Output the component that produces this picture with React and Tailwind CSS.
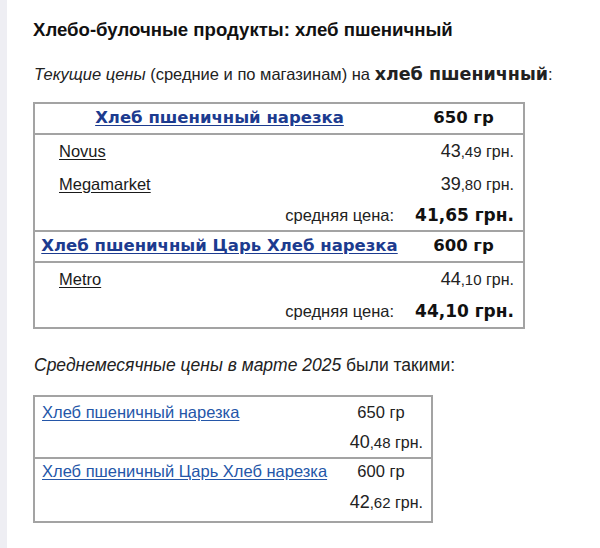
import React from "react";

const arial = { fontFamily: '"Liberation Sans", Arial, sans-serif' };

function Price({ int, dec }) {
  return (
    <span className="whitespace-nowrap text-[#222]">
      <span className="text-[18px]">{int}</span>
      <span className="text-[15px]">,{dec}</span>
      <span className="text-[16px]"> грн.</span>
    </span>
  );
}

function Header({ name, weight }) {
  return (
    <div className="grid grid-cols-[369px_1fr] h-[31px] items-center border-b-2 border-[#a3a3a3] font-['DejaVu_Sans',Verdana,sans-serif] font-bold">
      <div className="text-center whitespace-nowrap">
        <a className="text-[16.5px] text-[#1c3b8f] underline underline-offset-2">{name}</a>
      </div>
      <div className="text-center text-[16.5px] text-[#111]">{weight}</div>
    </div>
  );
}

function Store({ name, int, dec }) {
  return (
    <div className="grid grid-cols-[369px_1fr] h-[33px] items-center font-['Liberation_Sans',Arial,sans-serif]">
      <div className="pl-[24px]">
        <a className="text-[16.5px] text-[#1a1a1a] underline underline-offset-2">{name}</a>
      </div>
      <div className="text-right pr-[9px]">
        <Price int={int} dec={dec} />
      </div>
    </div>
  );
}

function Avg({ value, last }) {
  return (
    <div className={"grid grid-cols-[369px_1fr] h-[31px] items-center " + (last ? "" : "border-b-2 border-[#a3a3a3]")}>
      <div className="text-right pr-[10px] text-[16.5px] text-[#222] font-['Liberation_Sans',Arial,sans-serif]">средняя цена:</div>
      <div className="text-right pr-[9px] text-[17px] font-bold text-[#111] font-['DejaVu_Sans',Verdana,sans-serif] whitespace-nowrap">{value}</div>
    </div>
  );
}

function MonthRow({ name, weight, int, dec, last }) {
  return (
    <div className={last ? "" : "border-b-2 border-[#a3a3a3]"}>
      <div className={"grid grid-cols-[300px_1fr] items-center " + (last ? "h-[24px]" : "h-[30px]")}>
        <div className="pl-[7px] whitespace-nowrap">
          <a className="text-[16.5px] text-[#2456a8] underline underline-offset-2">{name}</a>
        </div>
        <div className="text-center text-[16.5px] text-[#222] pr-[4px]">{weight}</div>
      </div>
      <div className={"grid grid-cols-[300px_1fr] items-center " + (last ? "h-[38px]" : "h-[30px]")}>
        <div />
        <div className="text-right pr-[8px]">
          <Price int={int} dec={dec} />
        </div>
      </div>
    </div>
  );
}

export default function App() {
  return (
    <div className="flex w-[600px] h-[548px] bg-white overflow-hidden" style={arial}>
      <div className="w-[7px] bg-[#eeeef3] shrink-0" />
      <div className="flex-1 pl-[26px] pt-[18px]">
        <h1 className="text-[18.6px] font-bold text-[#111] leading-[24px] font-['Liberation_Sans',Arial,sans-serif]">
          Хлебо-булочные продукты: хлеб пшеничный
        </h1>
        <p className="mt-[22px] pl-[1px] text-[16.5px] leading-[20px] text-[#222] whitespace-nowrap font-['Liberation_Sans',Arial,sans-serif]">
          <i>Текущие цены</i> (средние и по магазинам) на{" "}
          <b className="text-[17.5px] font-['DejaVu_Sans',Verdana,sans-serif]">хлеб пшеничный</b>:
        </p>
        <div className="mt-[18px] w-[492px] border-2 border-[#a3a3a3]">
          <Header name="Хлеб пшеничный нарезка" weight="650 гр" />
          <Store name="Novus" int="43" dec="49" />
          <Store name="Megamarket" int="39" dec="80" />
          <Avg value="41,65 грн." />
          <Header name="Хлеб пшеничный Царь Хлеб нарезка" weight="600 гр" />
          <Store name="Metro" int="44" dec="10" />
          <Avg value="44,10 грн." last />
        </div>
        <p className="mt-[26px] pl-[1px] text-[17.5px] leading-[20px] text-[#222] whitespace-nowrap font-['Liberation_Sans',Arial,sans-serif]">
          <i>Среднемесячные цены в марте 2025</i> были такими:
        </p>
        <div className="mt-[20px] w-[400px] border-2 border-[#a3a3a3] font-['Liberation_Sans',Arial,sans-serif]">
          <MonthRow name="Хлеб пшеничный нарезка" weight="650 гр" int="40" dec="48" />
          <MonthRow name="Хлеб пшеничный Царь Хлеб нарезка" weight="600 гр" int="42" dec="62" last />
        </div>
      </div>
    </div>
  );
}
